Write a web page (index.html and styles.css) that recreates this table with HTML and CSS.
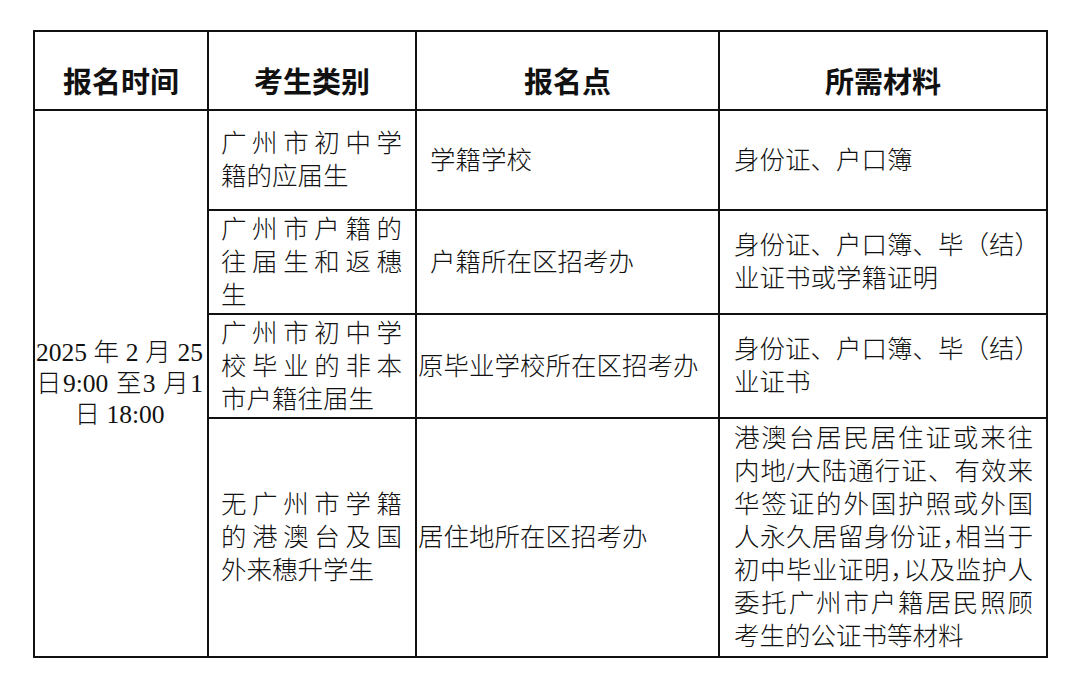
FILE: index.html
```html
<!DOCTYPE html>
<html lang="zh-CN">
<head>
<meta charset="utf-8">
<title>报名安排</title>
<link rel="stylesheet" href="styles.css">
</head>
<body>
<table class="sheet">
  <colgroup><col class="c1"><col class="c2"><col class="c3"><col class="c4"></colgroup>
  <thead>
    <tr class="rh"><th>报名时间</th><th>考生类别</th><th>报名点</th><th>所需材料</th></tr>
  </thead>
  <tbody>
    <tr class="r1">
      <td class="time" rowspan="4"><span class="ln j">2025 年 2 月 25</span><span class="ln j">日9:00 至3 月1</span><span class="ln c">日 18:00</span></td>
      <td class="cat"><span class="ln j">广州市初中学</span><span class="ln">籍的应届生</span></td>
      <td class="place pad">学籍学校</td>
      <td class="mat"><span class="ln">身份证、户口簿</span></td>
    </tr>
    <tr class="r2">
      <td class="cat"><span class="ln j">广州市户籍的</span><span class="ln j">往届生和返穗</span><span class="ln">生</span></td>
      <td class="place pad">户籍所在区招考办</td>
      <td class="mat"><span class="ln j">身份证、户口簿、毕（结）</span><span class="ln">业证书或学籍证明</span></td>
    </tr>
    <tr class="r3">
      <td class="cat"><span class="ln j">广州市初中学</span><span class="ln j">校毕业的非本</span><span class="ln">市户籍往届生</span></td>
      <td class="place">原毕业学校所在区招考办</td>
      <td class="mat"><span class="ln j">身份证、户口簿、毕（结）</span><span class="ln">业证书</span></td>
    </tr>
    <tr class="r4">
      <td class="cat"><span class="ln j">无广州市学籍</span><span class="ln j">的港澳台及国</span><span class="ln">外来穗升学生</span></td>
      <td class="place">居住地所在区招考办</td>
      <td class="mat"><span class="ln j">港澳台居民居住证或来往</span><span class="ln j">内地/大陆通行证、有效来</span><span class="ln j">华签证的外国护照或外国</span><span class="ln j">人永久居留身份证<span class="half">，</span>相当于</span><span class="ln j">初中毕业证明<span class="half">，</span>以及监护人</span><span class="ln j">委托广州市户籍居民照顾</span><span class="ln">考生的公证书等材料</span></td>
    </tr>
  </tbody>
</table>
</body>
</html>
```

FILE: styles.css
```css
html, body {
  margin: 0;
  padding: 0;
  background: #ffffff;
}

.sheet {
  border-collapse: collapse;
  table-layout: fixed;
  width: 1013px;
  margin: 30px 0 0 33px;
  font-family: "Liberation Serif", "Noto Sans CJK SC", serif;
  font-size: 25.5px;
  line-height: 33px;
  color: #111111;
}

.c1 { width: 174px; }
.c2 { width: 208px; }
.c3 { width: 303px; }
.c4 { width: 328px; }

.sheet th,
.sheet td {
  border: 2px solid #111111;
  padding: 0;
  vertical-align: middle;
  text-align: left;
  font-weight: 300;
}

.sheet th {
  font-family: "Noto Sans CJK SC", serif;
  font-size: 29px;
  font-weight: 700;
  text-align: center;
  vertical-align: bottom;
  padding-bottom: 12px;
}

.rh { height: 79px; }
.r1 { height: 100px; }
.r2 { height: 104px; }
.r3 { height: 104px; }
.r4 { height: 239px; }

.ln {
  display: block;
  white-space: nowrap;
}

.j {
  text-align: justify;
  text-align-last: justify;
}

.c {
  text-align: center;
}

.half {
  font-feature-settings: "halt";
}

.sheet .time {
  padding: 0 4px 0 1px;
  line-height: 31px;
}

.sheet .cat {
  padding: 0 13px 0 12px;
}

.sheet .place {
  padding: 0 4px 0 1px;
  white-space: nowrap;
}

.sheet .place.pad {
  padding-left: 13px;
}

.sheet .mat {
  padding: 0 13px 0 14px;
}
```
